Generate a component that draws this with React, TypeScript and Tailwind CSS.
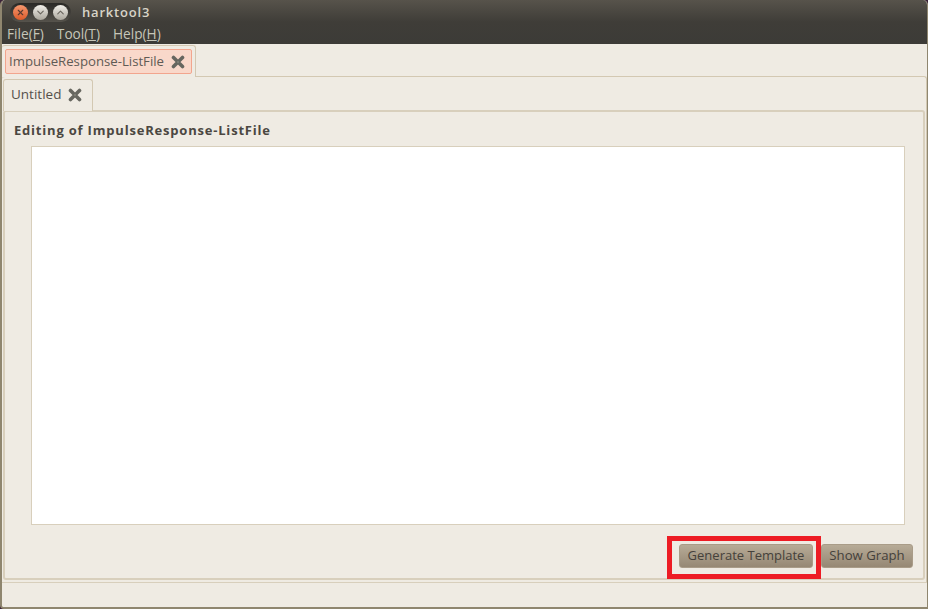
import { X, ChevronDown, ChevronUp } from "lucide-react";

function CloseGlyph() {
  return (
    <svg width="14" height="14" viewBox="0 0 14 14" className="shrink-0">
      <path d="M2.5 2.5 L11.5 11.5 M11.5 2.5 L2.5 11.5" stroke="#66665f" strokeWidth="3.6" strokeLinecap="round" />
      <circle cx="7" cy="7" r="1.2" fill="#7d7d74" />
    </svg>
  );
}

function Underlined({ label, k }: { label: string; k: string }) {
  return (
    <span>
      {label}(<span className="underline">{k}</span>)
    </span>
  );
}

export default function App() {
  return (
    <div className="h-[609px] w-[928px] overflow-hidden bg-[#3a2238] font-['Open_Sans','Noto_Sans',sans-serif]">
      <div className="relative flex h-[609px] w-[928px] flex-col overflow-hidden rounded-t-[5px] rounded-bl-[4px] border-r border-b-2 border-l-2 border-[#8f866f] bg-[#efebe3]">
        {/* title bar */}
        <div className="-mx-[2px] flex h-[44px] shrink-0 flex-col bg-gradient-to-b from-[#57534b] via-[#3f3d38] to-[#3c3b37] pl-[7px]">
          <div className="flex h-[25px] items-center">
            <div className="ml-[3px] flex h-[19px] items-center gap-[5px] rounded-full bg-gradient-to-b from-[#2a2926] to-[#56534c] px-[3px]">
              <span className="flex h-[15px] w-[15px] items-center justify-center rounded-full bg-gradient-to-b from-[#f5976d] to-[#dc5a28]">
                <X size={9} strokeWidth={3} className="text-[#5a3a30]" />
              </span>
              <span className="flex h-[15px] w-[15px] items-center justify-center rounded-full bg-gradient-to-b from-[#f2f0ea] to-[#aaa69c]">
                <ChevronDown size={11} strokeWidth={2.5} className="text-[#6a665e]" />
              </span>
              <span className="flex h-[15px] w-[15px] items-center justify-center rounded-full bg-gradient-to-b from-[#f2f0ea] to-[#aaa69c]">
                <ChevronUp size={11} strokeWidth={2.5} className="text-[#6a665e]" />
              </span>
            </div>
            <span className="ml-[11px] text-[13px] font-semibold tracking-[0.8px] text-[#d8d4c8]">harktool3</span>
          </div>
          <div className="flex h-[19px] items-center gap-[13px] text-[13.7px] text-[#c6c6b8]">
            <Underlined label="File" k="F" />
            <Underlined label="Tool" k="T" />
            <Underlined label="Help" k="H" />
          </div>
        </div>

        {/* outer tab strip */}
        <div className="flex h-[32px] shrink-0 items-end">
          <div className="z-10 -mb-px flex h-[32px] w-[194px] items-start rounded-t-[3px] border-t border-r border-[#d3c8b2] bg-[#efebe3] pt-[3px] pl-[3px]">
            <div className="flex h-[25px] w-[187px] items-center rounded-[2px] border border-[#f2a58e] bg-[#f9d8ca] pl-[3px] text-[13.2px] text-[#5f5b55]">
              <span className="whitespace-nowrap">ImpulseResponse-ListFile</span>
              <span className="ml-[7px]">
                <CloseGlyph />
              </span>
            </div>
          </div>
        </div>

        {/* outer notebook */}
        <div className="flex min-h-0 flex-1 flex-col rounded-t-[3px] border-t border-r border-[#d3c8b2] pt-[1px] pl-px">
          <div className="flex h-[32px] shrink-0 items-end">
            <div className="z-10 -mb-px flex h-[32px] w-[90px] items-center rounded-t-[3px] border-t border-r border-l border-[#d3c8b2] bg-[#efebe3] pb-[2px] pl-[7px] text-[13.5px] text-[#55514b]">
              <span>Untitled</span>
              <span className="ml-[7px]">
                <CloseGlyph />
              </span>
            </div>
          </div>

          {/* inner notebook */}
          <div className="mr-px flex h-[470px] shrink-0 flex-col rounded-[3px] border-2 border-[#d8cfbc]">
            <div className="flex h-[34px] shrink-0 items-center pt-[3px] pl-[9px] text-[13px] font-bold tracking-[0.8px] text-[#4b4741]">
              Editing of ImpulseResponse-ListFile
            </div>
            <div className="mr-[18px] ml-[26px] h-[379px] shrink-0 border border-[#d8cfbc] bg-white" />
            <div className="flex flex-1 items-center justify-end gap-[8px] pt-[9px] pr-[10px]">
              <div className="relative">
                <button className="flex h-[24px] w-[134px] items-center justify-center rounded-[3px] border border-[#a99c88] bg-gradient-to-b from-[#b7ab97] to-[#968874] text-[13px] text-[#45413b]">
                  Generate Template
                </button>
                {/* red highlight drawn over the screenshot */}
                <div className="pointer-events-none absolute -top-[8px] -right-[8px] -bottom-[11px] -left-[12px] border-[5px] border-[#ed1c24]" />
              </div>
              <button className="flex h-[24px] w-[92px] items-center justify-center rounded-[3px] border border-[#a99c88] bg-gradient-to-b from-[#b7ab97] to-[#968874] text-[13.2px] text-[#45413b]">
                Show Graph
              </button>
            </div>
          </div>
        </div>

        {/* status bar */}
        <div className="h-[25px] shrink-0 border-t border-[#d8cfbc] bg-[#efebe3]" />
      </div>
    </div>
  );
}
